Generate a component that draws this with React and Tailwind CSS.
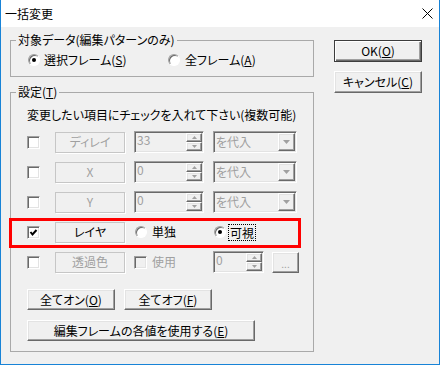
import React from "react";

const raised =
  "border border-t-white border-l-white border-b-[#696969] border-r-[#696969] shadow-[inset_-1px_-1px_0_#a0a0a0,inset_1px_1px_0_#e3e3e3] bg-[#f0f0f0]";
const sunken =
  "border border-t-[#a0a0a0] border-l-[#a0a0a0] border-b-white border-r-white shadow-[inset_1px_1px_0_#696969,inset_-1px_-1px_0_#e3e3e3]";

function Check({ checked, disabled }) {
  return (
    <div
      className={`w-[13px] h-[13px] shrink-0 flex items-center justify-center ${sunken} ${
        disabled ? "bg-[#f0f0f0]" : "bg-white"
      }`}
    >
      {checked && (
        <svg width="9" height="9" viewBox="0 0 9 9">
          <polyline points="1.5,4 3.5,6.5 7.5,2" fill="none" stroke="#000" strokeWidth="2" />
        </svg>
      )}
    </div>
  );
}

function Radio({ on }) {
  return (
    <div className="w-[12px] h-[12px] shrink-0 rounded-full bg-white border border-t-[#a0a0a0] border-l-[#a0a0a0] border-b-white border-r-white shadow-[inset_1px_1px_0_#696969] flex items-center justify-center">
      {on && <div className="w-[4px] h-[4px] rounded-full bg-black" />}
    </div>
  );
}

function Btn({ children, className = "" }) {
  return (
    <div className={`h-[21px] flex items-center justify-center ${raised} ${className}`}>
      {children}
    </div>
  );
}

function Label({ children, enabled }) {
  return (
    <div
      className={`ml-[15px] w-[70px] h-[21px] flex items-center justify-center border border-[#c6c6c6] shadow-[1px_1px_0_#fff] ${
        enabled ? "text-black" : "text-[#a0a0a0]"
      }`}
    >
      {children}
    </div>
  );
}

function Arrow({ up }) {
  return (
    <svg width="5" height="3" viewBox="0 0 5 3">
      <polygon points={up ? "2.5,0 5,3 0,3" : "0,0 5,0 2.5,3"} fill="#a0a0a0" />
    </svg>
  );
}

function Spin({ value, w }) {
  return (
    <div className={`h-[22px] ${w} flex justify-between bg-[#f0f0f0] ${sunken} p-[1px]`}>
      <span className="pl-[1px] leading-[13px] text-[#a0a0a0]">{value}</span>
      <div className="flex flex-col w-[16px]">
        <div className={`h-[9px] flex items-center justify-center ${raised}`}>
          <Arrow up />
        </div>
        <div className={`h-[9px] flex items-center justify-center ${raised}`}>
          <Arrow />
        </div>
      </div>
    </div>
  );
}

function Combo() {
  return (
    <div className={`ml-[9px] w-[84px] h-[22px] flex justify-between bg-[#f0f0f0] ${sunken} p-[1px]`}>
      <span className="pl-[1px] leading-[18px] text-[#a0a0a0]">を代入</span>
      <div className={`w-[17px] flex items-center justify-center ${raised}`}>
        <svg width="7" height="4" viewBox="0 0 7 4">
          <polygon points="0,0 7,0 3.5,4" fill="#a0a0a0" />
        </svg>
      </div>
    </div>
  );
}

function ValueRow({ label, value }) {
  return (
    <div className="h-[22px] flex items-center pl-[16px]">
      <Check />
      <Label>{label}</Label>
      <div className="ml-[9px]">
        <Spin value={value} w="w-[70px]" />
      </div>
      <Combo />
    </div>
  );
}

export default function App() {
  return (
    <div className="relative w-[440px] h-[365px] overflow-hidden bg-[#f0f0f0] border-l border-r border-b border-[#1883d7] font-['Noto_Sans_CJK_JP',sans-serif] [font-feature-settings:'palt'] text-[12px] leading-[14px] text-black">
      <div className="h-[27px] bg-white flex items-center justify-between pl-[4px] pr-[6px]">
        <span className="text-[12px]">一括変更</span>
        <svg width="11" height="11" viewBox="0 0 11 11">
          <path d="M0.5 0.5 L10.5 10.5 M10.5 0.5 L0.5 10.5" stroke="#000" strokeWidth="1" />
        </svg>
      </div>

      <div className="flex">
        <div className="ml-[9px] w-[304px]">
          <fieldset className="mt-[6px] border border-[#a9a9a9]">
            <legend className="ml-[5px] px-[2px] leading-[14px]">対象データ(編集パターンのみ)</legend>
            <div className="pt-[4px] pb-[7px] pl-[17px]">
              <div className="h-[18px] flex items-center">
                <div className="w-[140px] flex items-center gap-[4px]">
                  <Radio on />
                  <span>
                    選択フレーム(<u>S</u>)
                  </span>
                </div>
                <div className="flex items-center gap-[5px]">
                  <Radio />
                  <span>
                    全フレーム(<u>A</u>)
                  </span>
                </div>
              </div>
            </div>
          </fieldset>

          <fieldset className="mt-[8px] border border-[#a9a9a9]">
            <legend className="ml-[5px] px-[2px] leading-[14px]">
              設定(<u>T</u>)
            </legend>
            <div className="pb-[10px]">
              <div className="mt-[9px] pl-[16px] h-[14px] whitespace-nowrap">
                変更したい項目にチェックを入れて下さい(複数可能)
              </div>
              <div className="mt-[9px] flex flex-col gap-[8px]">
                <ValueRow label="ディレイ" value="33" />
                <ValueRow label="X" value="0" />
                <ValueRow label="Y" value="0" />
                <div className="h-[22px] flex items-center pl-[16px]">
                  <Check checked />
                  <Label enabled>レイヤ</Label>
                  <div className="ml-[10px] w-[79px] flex items-center gap-[5px]">
                    <Radio />
                    <span>単独</span>
                  </div>
                  <div className="flex items-center">
                    <Radio on />
                    <span className="ml-[2px] px-[1px] py-[1px] border border-dotted border-black leading-[13px]">可視</span>
                  </div>
                </div>
                <div className="h-[22px] flex items-center pl-[16px]">
                  <Check />
                  <Label>透過色</Label>
                  <div className="ml-[9px] w-[79px] flex items-center gap-[5px]">
                    <Check disabled />
                    <span className="text-[#a0a0a0]">使用</span>
                  </div>
                  <Spin value="0" w="w-[51px]" />
                  <Btn className="ml-[8px] w-[27px] text-[#a0a0a0]">
                    <span className="text-[10px] leading-[10px] pt-[3px]">...</span>
                  </Btn>
                </div>
              </div>
              <div className="mt-[16px] pl-[16px] flex gap-[9px]">
                <Btn className="w-[88px]">
                  全てオン(<u>O</u>)
                </Btn>
                <Btn className="w-[88px]">
                  全てオフ(<u>F</u>)
                </Btn>
              </div>
              <div className="mt-[10px] pl-[16px]">
                <Btn className="w-[228px]">
                  編集フレームの各値を使用する(<u>E</u>)
                </Btn>
              </div>
            </div>
          </fieldset>
        </div>

        <div className="ml-[20px] w-[88px] flex flex-col">
          <div className="mt-[13px] h-[22px] border border-[#3c3c3c] bg-[#f0f0f0] shadow-[inset_1px_1px_0_#fff,inset_-1px_-1px_0_#696969,inset_-2px_-2px_0_#a0a0a0] flex items-center justify-center">
            OK(<u>O</u>)
          </div>
          <Btn className="mt-[9px] h-[22px]">
            キャンセル(<u>C</u>)
          </Btn>
        </div>
      </div>

      <div className="absolute left-[8px] top-[218px] w-[292px] h-[30px] border-[3px] border-[#ff0000]" />
    </div>
  );
}
